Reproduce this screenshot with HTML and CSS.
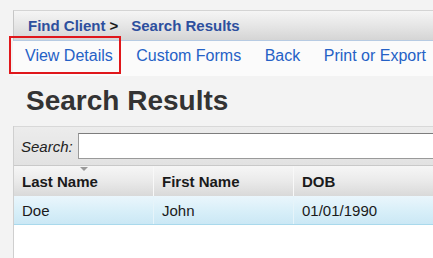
FILE: index.html
```html
<!DOCTYPE html>
<html lang="en">
<head>
    <meta charset="UTF-8">
    <meta name="viewport" content="width=device-width, initial-scale=1.0">
    <title>Search Results</title>
    <link rel="stylesheet" href="styles.css">
</head>
<body>

    <div class="page">
        <!-- Breadcrumb -->
        <div class="breadcrumb">
            <a class="crumb">Find Client</a>
            <span class="crumb-sep">&gt;</span>
            <a class="crumb">Search Results</a>
        </div>

        <!-- Action links -->
        <div class="actions">
            <a class="action highlight">View Details</a>
            <a class="action">Custom Forms</a>
            <a class="action">Back</a>
            <a class="action">Print or Export</a>
        </div>

        <!-- Title -->
        <h1 class="page-title">Search Results</h1>

        <!-- Results grid -->
        <div class="grid">
            <div class="grid-search">
                <label class="search-label">Search:</label>
                <input class="search-input" type="text">
            </div>

            <div class="grid-head">
                <div class="col sorted">Last Name</div>
                <div class="col">First Name</div>
                <div class="col">DOB</div>
            </div>

            <div class="grid-row">
                <div class="col">Doe</div>
                <div class="col">John</div>
                <div class="col">01/01/1990</div>
            </div>

            <div class="grid-empty"></div>
        </div>
    </div>

</body>
</html>
```

FILE: styles.css
```css
/* Base */
body {
    margin: 0;
    font-family: "Liberation Sans", Arial, sans-serif;
    background-color: #f3f3f3;
    overflow: hidden;
}

.page {
    width: 480px;
    padding-top: 10px;
    padding-left: 13px;
}

/* Breadcrumb */
.breadcrumb {
    display: flex;
    align-items: center;
    height: 28px;
    padding-left: 14px;
    padding-bottom: 1px;
    border-top: 1px solid #d4d4d4;
    border-left: 1px solid #c6c6c6;
    border-bottom: 1px solid #b7cbe3;
    background: linear-gradient(to bottom, #f5f5f5 0%, #e6e6e6 50%, #d5d5d5 100%);
    font-size: 15px;
    font-weight: bold;
}
.crumb {
    color: #2d4f9e;
}
.crumb-sep {
    color: #1a1a1a;
    margin-left: 4px;
    margin-right: 13px;
}

/* Action links */
.actions {
    display: flex;
    padding-left: 12px;
    padding-bottom: 5px;
    background-color: #fbfbfb;
}
.action {
    position: relative;
    margin-right: 23.5px;
    font-size: 16px;
    line-height: 30px;
    color: #2561c6;
}
.action.highlight::after {
    content: "";
    position: absolute;
    top: -5px;
    bottom: -3px;
    left: -16px;
    right: -8px;
    border: 2px solid #e0171b;
}

/* Title */
.page-title {
    margin: 0;
    padding: 10px 0 10px 13px;
    font-size: 28px;
    line-height: 30px;
    font-weight: bold;
    color: #333333;
}

/* Grid */
.grid {
    border-left: 1px solid #cfcfcf;
    background-color: #ffffff;
}

.grid-search {
    display: flex;
    align-items: center;
    height: 38px;
    padding-left: 7px;
    background: linear-gradient(to bottom, #ececec, #e2e2e2);
    border-top: 1px solid #d8d8d8;
}
.search-label {
    font-size: 15px;
    font-style: italic;
    color: #222222;
    margin-right: 5px;
}
.search-input {
    flex: 1;
    height: 24px;
    margin: 0;
    padding: 0;
    border: 1px solid #9a9a9a;
    border-top-color: #7d7d7d;
    background-color: #ffffff;
}

.grid-head,
.grid-row {
    display: flex;
}
.grid-head {
    height: 30px;
    border-top: 1px solid #c9c9c9;
    background: linear-gradient(to bottom, #f6f6f6 0%, #eaeaea 50%, #d9d9d9 100%);
    font-weight: bold;
}
.grid-row {
    height: 28px;
    border-bottom: 1px solid #a9d9ec;
    background: linear-gradient(to bottom, #eaf6fc 0%, #d6eef8 60%, #cbe8f5 100%);
    color: #222222;
}

.col {
    position: relative;
    width: 131px;
    padding-left: 8px;
    border-right: 1px solid #f8f8f8;
    font-size: 15px;
    display: flex;
    align-items: center;
    color: #1a1a1a;
}
.grid-row .col {
    border-right-color: #e6f4fa;
}
.col:last-child {
    flex: 1;
    border-right: none;
}

/* sort arrow */
.col.sorted::before {
    content: "";
    position: absolute;
    top: 1px;
    left: 66px;
    border-left: 4px solid transparent;
    border-right: 4px solid transparent;
    border-top: 4px solid #9a9a9a;
}

.grid-empty {
    height: 40px;
}
```
